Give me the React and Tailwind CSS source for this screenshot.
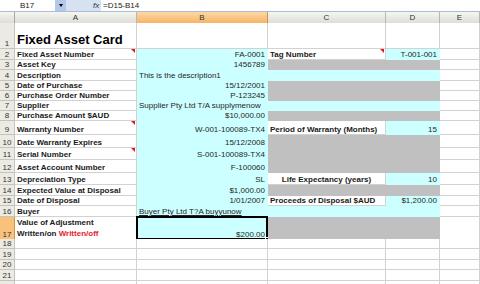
import React from 'react';

// Fixed asset card sheet, Excel 2003 look

const GRID = 'grid grid-cols-[15px_122px_131px_118px_54px_40px]';

const rows = [
  { n: 1, h: 'h-[26px]', cells: [{ t: 'Fixed Asset Card', big: true }, {}, {}, {}, {}] },
  { n: 2, h: 'h-[11px]', cells: [
    { t: 'Fixed Asset Number', b: true, note: true },
    { t: 'FA-0001', f: 'c', r: true },
    { t: 'Tag Number', b: true, note: true },
    { t: 'T-001-001', f: 'c', r: true },
    {},
  ] },
  { n: 3, h: 'h-[10px]', cells: [
    { t: 'Asset Key', b: true },
    { t: '1456789', f: 'c', r: true },
    { f: 'g' }, { f: 'g' }, {},
  ] },
  { n: 4, h: 'h-[11px]', cells: [
    { t: 'Description', b: true },
    { t: 'This is the description1', f: 'c' },
    { f: 'c' }, { f: 'c' }, {},
  ] },
  { n: 5, h: 'h-[10px]', cells: [
    { t: 'Date of Purchase', b: true },
    { t: '15/12/2001', f: 'c', r: true },
    { f: 'g' }, { f: 'g' }, {},
  ] },
  { n: 6, h: 'h-[10px]', cells: [
    { t: 'Purchase Order Number', b: true },
    { t: 'P-123245', f: 'c', r: true },
    { f: 'g' }, { f: 'g' }, {},
  ] },
  { n: 7, h: 'h-[10px]', cells: [
    { t: 'Supplier', b: true },
    { t: 'Supplier Pty Ltd T/A supplymenow', f: 'c' },
    { f: 'c' }, { f: 'c' }, {},
  ] },
  { n: 8, h: 'h-[10px]', cells: [
    { t: 'Purchase Amount $AUD', b: true },
    { t: '$10,000.00', f: 'c', r: true },
    { f: 'g' }, { f: 'g' }, {},
  ] },
  { n: 9, h: 'h-[14px]', cells: [
    { t: 'Warranty Number', b: true, note: true },
    { t: 'W-001-100089-TX4', f: 'c', r: true },
    { t: 'Period of Warranty (Months)', b: true },
    { t: '15', f: 'c', r: true },
    {},
  ] },
  { n: 10, h: 'h-[13px]', cells: [
    { t: 'Date Warranty Expires', b: true },
    { t: '15/12/2008', f: 'c', r: true },
    { f: 'g' }, { f: 'g' }, {},
  ] },
  { n: 11, h: 'h-[12px]', cells: [
    { t: 'Serial Number', b: true, note: true },
    { t: 'S-001-100089-TX4', f: 'c', r: true },
    { f: 'g' }, { f: 'g' }, {},
  ] },
  { n: 12, h: 'h-[13px]', cells: [
    { t: 'Asset Account Number', b: true },
    { t: 'F-100060', f: 'c', r: true },
    { f: 'g' }, { f: 'g' }, {},
  ] },
  { n: 13, h: 'h-[12px]', cells: [
    { t: 'Depreciation Type', b: true },
    { t: 'SL', f: 'c', r: true },
    { t: 'Life Expectancy (years)', b: true, c: true },
    { t: '10', f: 'c', r: true },
    {},
  ] },
  { n: 14, h: 'h-[11px]', cells: [
    { t: 'Expected Value at Disposal', b: true },
    { t: '$1,000.00', f: 'c', r: true },
    { f: 'g' }, { f: 'g' }, {},
  ] },
  { n: 15, h: 'h-[10px]', cells: [
    { t: 'Date of Disposal', b: true },
    { t: '1/01/2007', f: 'c', r: true },
    { t: 'Proceeds of Disposal $AUD', b: true },
    { t: '$1,200.00', f: 'c', r: true },
    {},
  ] },
  { n: 16, h: 'h-[11px]', cells: [
    { t: 'Buyer', b: true },
    { t: 'Buyer Pty Ltd T?A buyyunow', f: 'c', u: true },
    { f: 'c' }, { f: 'c' }, {},
  ] },
  { n: 17, h: 'h-[22px]', active: true, cells: [
    { adj: true, b: true },
    { t: '$200.00', f: 'c', r: true, sel: true },
    { f: 'g' }, { f: 'g' }, {},
  ] },
  { n: 18, h: 'h-[10px]', cells: [{}, {}, {}, {}, {}] },
  { n: 19, h: 'h-[11px]', cells: [{}, {}, {}, {}, {}] },
  { n: 20, h: 'h-[10px]', cells: [{}, {}, {}, {}, {}] },
  { n: 21, h: 'h-[11px]', cells: [{}, {}, {}, {}, {}] },
  { n: 22, h: 'h-[11px]', cells: [{}, {}, {}, {}, {}] },
];

function Cell({ t, f, r, b, c, u, note, sel, big, adj }) {
  const fill =
    f === 'c' ? 'bg-[#ccffff] border-[#ccffff]'
    : f === 'g' ? 'bg-[#c0c0c0] border-[#c0c0c0]'
    : 'bg-white border-[#d2d2d2]';
  const justify = r ? 'justify-end pr-[2px]' : c ? 'justify-center' : 'justify-start pl-[2px]';

  return (
    <div className={`relative flex items-end border-r border-b ${fill} ${justify}`}>
      {big && <span className="text-[13px] font-bold leading-[15px] pb-[1px] whitespace-nowrap">{t}</span>}
      {adj && (
        <span className="text-[8px] font-bold leading-[11px] text-[#1a1a1a] whitespace-nowrap">
          Value of Adjustment<br />
          Written/on <span className="text-[#e8202a]">Written/off</span>
        </span>
      )}
      {!big && !adj && t && (
        <span
          className={`text-[8px] leading-[9px] whitespace-nowrap ${b ? 'font-bold text-[#1a1a1a]' : 'text-[#262626]'} ${u ? 'underline' : ''}`}
        >
          {t}
        </span>
      )}
      {note && (
        <span className="absolute top-0 right-[1px] w-0 h-0 border-t-[4px] border-l-[4px] border-t-[#e01818] border-l-transparent" />
      )}
      {sel && (
        <>
          <span className="absolute -top-[1px] -left-[1px] -right-[1px] -bottom-[1px] border-2 border-black" />
          <span className="absolute -bottom-[2px] -right-[2px] w-[4px] h-[4px] bg-black border border-white" />
        </>
      )}
    </div>
  );
}

export default function App() {
  return (
    <div className="w-[480px] h-[284px] overflow-hidden bg-white font-['Liberation_Sans',Arial,sans-serif] text-black">
      {/* name box + formula bar */}
      <div className="flex h-[12px] bg-[#d6e1f2] border-b border-[#a9bcdc]">
        <div className="w-[55px] bg-white flex items-center pl-[20px] text-[8px] text-[#222]">B17</div>
        <div className="w-[11px] bg-[#b4c8ea] flex items-center justify-center">
          <span className="w-0 h-0 border-l-[2px] border-r-[2px] border-t-[3px] border-l-transparent border-r-transparent border-t-black" />
        </div>
        <div className="w-[27px]" />
        <div className="w-[8px] flex items-center text-[8px] italic text-[#333]">fx</div>
        <div className="flex-1 bg-white flex items-center pl-[2px] text-[8px] text-[#222]">=D15-B14</div>
      </div>

      {/* column headers */}
      <div className={`${GRID} h-[11px]`}>
        <div className="bg-linear-to-b from-[#f6f6f2] to-[#dcdcd4] border-r border-b border-[#a8a89e]" />
        {['A', 'B', 'C', 'D', 'E'].map((l) => (
          <div
            key={l}
            className={`flex items-center justify-center text-[8px] text-[#333] border-r border-b ${
              l === 'B'
                ? 'bg-linear-to-b from-[#fcd8a4] to-[#f5b15e] border-[#c99650]'
                : 'bg-linear-to-b from-[#f6f6f2] to-[#dcdcd4] border-[#b8b8ae]'
            }`}
          >
            {l}
          </div>
        ))}
      </div>

      {/* sheet rows */}
      {rows.map((row) => (
        <div key={row.n} className={`${GRID} ${row.h}`}>
          <div
            className={`flex items-end justify-center text-[8px] leading-[9px] text-[#333] border-r border-b ${
              row.active
                ? 'bg-[#f8c27c] border-[#c99650]'
                : 'bg-[#ebebe4] border-[#c4c4ba]'
            }`}
          >
            {row.n}
          </div>
          {row.cells.map((cell, i) => (
            <Cell key={i} {...cell} />
          ))}
        </div>
      ))}
    </div>
  );
}
